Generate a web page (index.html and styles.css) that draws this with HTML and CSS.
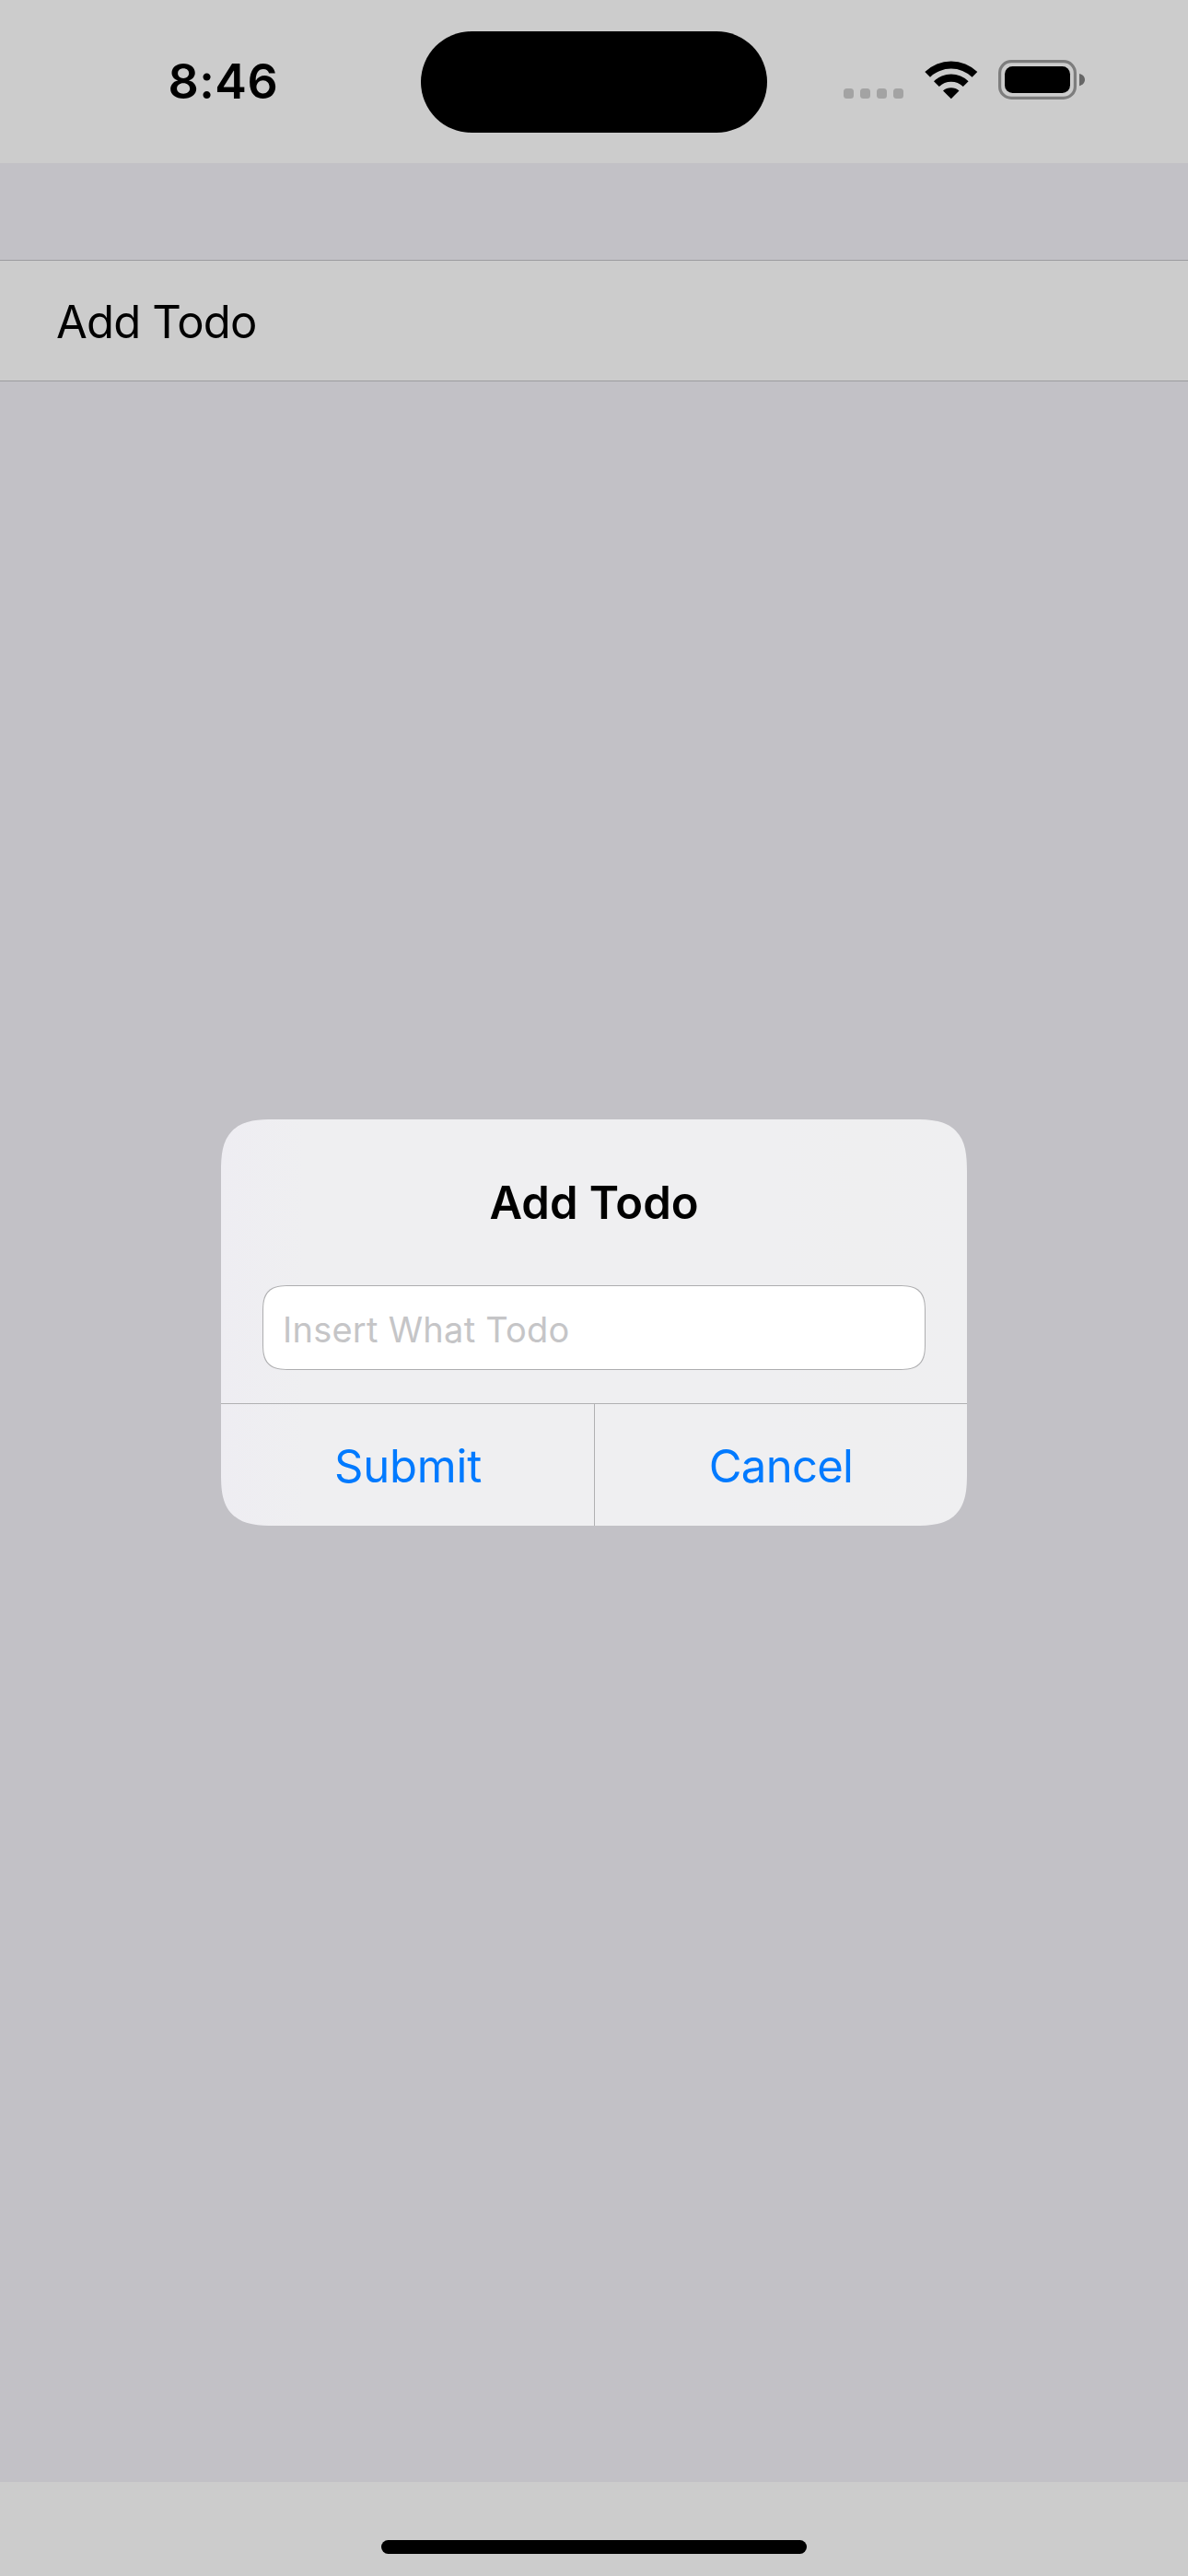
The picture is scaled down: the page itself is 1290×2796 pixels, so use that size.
FILE: index.html
```html
<!DOCTYPE html>
<html lang="en">
<head>
<meta charset="utf-8">
<title>Add Todo</title>
<link rel="stylesheet" href="styles.css">
</head>
<body>
<div class="screen">
  <header class="status-bar">
    <span class="time">8:46</span>
    <div class="island"></div>
    <div class="indicators">
      <div class="signal"><i></i><i></i><i></i><i></i></div>
      <svg class="wifi" width="58" height="44" viewBox="0 0 58 44">
        <path d="M0.3 13.1 A41 41 0 0 1 57.3 13.1 L51.6 18.7 A33 33 0 0 0 6 18.7 Z"/>
        <path d="M10 23.2 A27 27 0 0 1 47.6 23.2 L41.8 29 A19 19 0 0 0 15.8 29 Z"/>
        <path d="M20 33.4 A13.5 13.5 0 0 1 37.5 33.4 L28.8 42.2 Z"/>
      </svg>
      <svg class="battery" width="95" height="44" viewBox="0 0 95 44">
        <rect x="1.6" y="1.6" width="81.8" height="39.8" rx="12.5" fill="none" stroke="#7d7d7d" stroke-width="3.2"/>
        <rect x="7" y="7" width="71" height="29" rx="8.5"/>
        <path d="M88 15 C92.2 16 94 18.8 94 21.6 C94 24.4 92.2 27.3 88 28.3 Z" fill="#666"/>
      </svg>
    </div>
  </header>

  <main class="content">
    <div class="row">Add Todo</div>
    <section class="dialog" role="dialog" aria-labelledby="dialog-title">
      <h1 class="dialog-title" id="dialog-title">Add Todo</h1>
      <input class="field" type="text" placeholder="Insert What Todo">
      <div class="actions">
        <button class="action submit" type="button">Submit</button>
        <button class="action cancel" type="button">Cancel</button>
      </div>
    </section>
  </main>

  <footer class="home-bar"><div class="home-indicator"></div></footer>
</div>
</body>
</html>
```
FILE: styles.css
```css
* {
  box-sizing: border-box;
}

body {
  margin: 0;
  font-family: Inter, "Liberation Sans", sans-serif;
  color: #000;
}

.screen {
  display: flex;
  flex-direction: column;
  width: 1290px;
  height: 2796px;
  background: #c2c1c6;
}

/* Status bar */

.status-bar {
  display: grid;
  grid-template-columns: 457px 376px 457px;
  align-items: start;
  height: 177px;
  padding-top: 33px;
  background: #ccc;
}

.time {
  padding-left: 182.5px;
  font-size: 52px;
  font-weight: 600;
  line-height: 112px;
  letter-spacing: 0.5px;
}

.island {
  height: 110px;
  margin-top: 1px;
  border-radius: 55px;
  background: #000;
}

.indicators {
  display: flex;
  align-items: flex-start;
  padding: 32px 0 0 83px;
}

.signal {
  display: flex;
  gap: 7px;
  margin-top: 31px;
}

.signal i {
  width: 11px;
  height: 11px;
  border-radius: 3.5px;
  background: #a3a3a3;
}

.wifi {
  margin: 0 22px 0 23px;
}

.battery {
  flex: none;
}

/* List */

.content {
  display: flex;
  flex: 1;
  flex-direction: column;
  padding-top: 105px;
}

.row {
  height: 132px;
  padding: 2px 0 0 61px;
  border: solid #9c9c9f;
  border-width: 1px 0;
  background: #ccc;
  font-size: 49px;
  line-height: 130px;
  letter-spacing: -0.83px;
}

/* Dialog */

.dialog {
  display: flex;
  flex-direction: column;
  align-self: center;
  width: 810px;
  height: 441px;
  margin-top: 801px;
  overflow: hidden;
  border-radius: 58px;
  corner-shape: superellipse(1.54);
  background: linear-gradient(90deg, #eeedf2 0, #efeff1 90px, #efeff1 600px, #efeff0 700px, #efeff1 100%);
}

.dialog-title {
  margin: 60px 0 59px;
  font-size: 49px;
  font-weight: 600;
  line-height: 61px;
  text-align: center;
}

.field {
  width: 720px;
  height: 92px;
  margin: 0 45px 36px;
  padding: 4px 20px 0 21px;
  border: 1px solid #adadaf;
  border-radius: 30px;
  corner-shape: superellipse(1.58);
  background: #fff;
  font: 400 38px Inter, "Liberation Sans", sans-serif;
  letter-spacing: 0.25px;
  outline: none;
}

.field::placeholder {
  color: #c5c5c7;
  opacity: 1;
}

.actions {
  display: grid;
  grid-template-columns: 405px 405px;
  height: 133px;
  border-top: 1px solid #b0b0b2;
}

.action {
  padding: 4px 0 0;
  border: 0;
  background: none;
  color: #007aff;
  font: 400 49px Inter, "Liberation Sans", sans-serif;
  line-height: 128px;
}

.submit {
  padding-left: 1px;
  letter-spacing: -0.2px;
}

.cancel {
  border-left: 1px solid #b0b0b2;
  letter-spacing: -0.7px;
}

/* Home indicator */

.home-bar {
  display: flex;
  justify-content: center;
  height: 102px;
  padding-top: 63px;
  background: #ccc;
}

.home-indicator {
  width: 462px;
  height: 15px;
  border-radius: 8px;
  background: #000;
}
```
